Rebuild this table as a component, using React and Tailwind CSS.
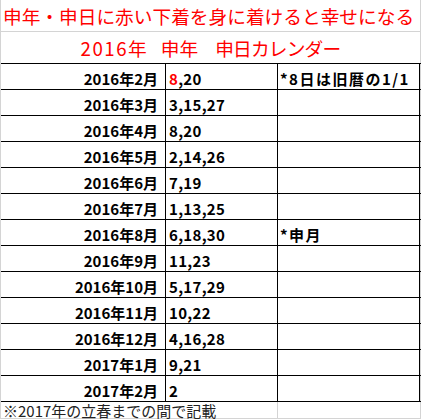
import React from "react";

const rows = [
  ["2016年2月", "8,20", "*8日は旧暦の1/1"],
  ["2016年3月", "3,15,27", ""],
  ["2016年4月", "8,20", ""],
  ["2016年5月", "2,14,26", ""],
  ["2016年6月", "7,19", ""],
  ["2016年7月", "1,13,25", ""],
  ["2016年8月", "6,18,30", "*申月"],
  ["2016年9月", "11,23", ""],
  ["2016年10月", "5,17,29", ""],
  ["2016年11月", "10,22", ""],
  ["2016年12月", "4,16,28", ""],
  ["2017年1月", "9,21", ""],
  ["2017年2月", "2", ""],
];

const font = { fontFamily: '"Noto Sans CJK JP", "Noto Sans", sans-serif' };

export default function App() {
  return (
    <div className="w-[424px] h-[420px] bg-white overflow-hidden" style={font}>
      <div className="w-[421px] border-l border-[#d4d4d4]">
        {/* title row 1 */}
        <div className="h-[32px] border-b border-r border-[#d4d4d4] flex items-center pl-[2px] pt-[2px] text-[18.7px] leading-none text-[#ff0000] whitespace-nowrap">
          申年・申日に赤い下着を身に着けると幸せになる
        </div>
        {/* title row 2 */}
        <div className="h-[31px] border-r border-[#d4d4d4] flex items-center justify-center pt-[2px] text-[18.7px] leading-none text-[#ff0000] whitespace-nowrap">
          <span className="tracking-[1.5px]">2016</span>
          <span>年</span>
          <span className="ml-[14px]">申年</span>
          <span className="ml-[17px] tracking-[-0.8px]">申日カレンダー</span>
        </div>
        {/* table */}
        <div className="border-b border-black">
          {rows.map((r, i) => (
            <div
              key={i}
              className="grid grid-cols-[165px_112px_142px_1px] h-[26px] border-t border-black text-[15px] font-bold leading-none text-black whitespace-nowrap"
            >
              <div className="border-r border-black flex items-center justify-end pr-[7px] pt-[3px]">
                {r[0]}
              </div>
              <div className="border-r border-black flex items-center pl-[3px] pt-[3px] tracking-[0.3px]">
                {i === 0 ? (
                  <>
                    <span className="text-[#ff0000]">8</span>
                    <span>,20</span>
                  </>
                ) : (
                  r[1]
                )}
              </div>
              <div className="border-r border-black flex items-center pl-[2px] pt-[3px] tracking-[1.5px]">
                {r[2]}
              </div>
              <div className="bg-[#d4d4d4]"></div>
            </div>
          ))}
        </div>
        {/* footer */}
        <div className="flex h-[17px] border-b border-[#d4d4d4] text-[15px] leading-none text-[#222] whitespace-nowrap">
          <div className="w-[277px] border-r border-[#d4d4d4] flex items-center pl-[2px] overflow-visible">
            ※2017年の立春までの間で記載
          </div>
          <div className="w-[143px] border-r border-[#d4d4d4]"></div>
        </div>
      </div>
    </div>
  );
}
